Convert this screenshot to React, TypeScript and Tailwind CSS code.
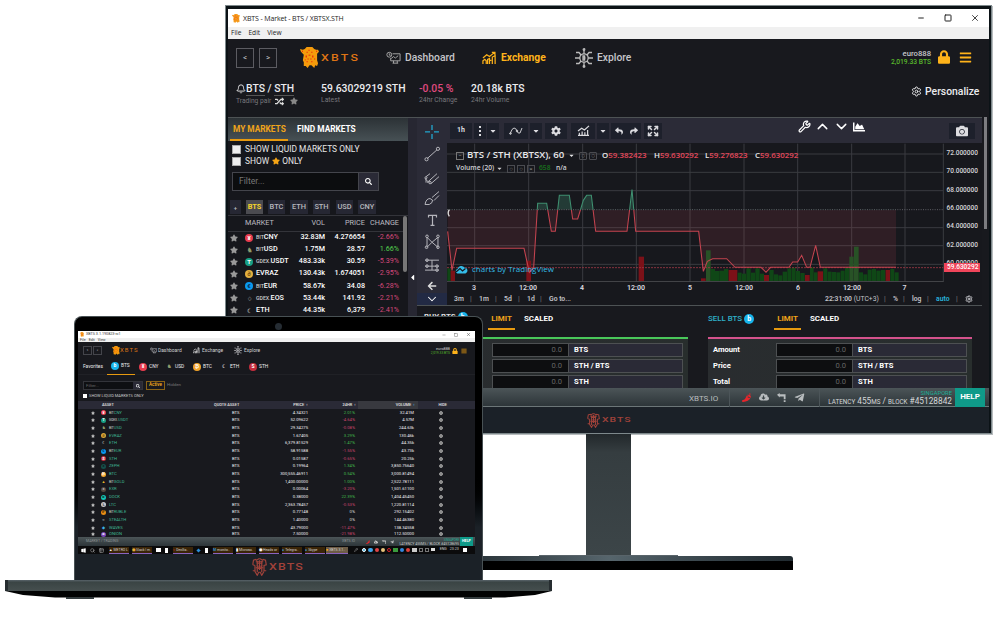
import React from "react";
import {
  FaBars, FaCamera, FaChartArea, FaCloudDownloadAlt, FaCog, FaLock, FaPepperHot,
  FaRandom, FaReply, FaSearch, FaShare, FaStar, FaTelegramPlane, FaWindows, FaArrowLeft, FaCaretDown, FaCaretLeft,
} from "react-icons/fa";
import { Bell, ChevronDown, ChevronUp, Expand, Settings, Wrench, Minus, Square, X, Pencil, Search, PanelsTopLeft } from "lucide-react";

function Beast({ className }: { className: string }) {
  return (
    <svg viewBox="0 0 20 22" className={className} preserveAspectRatio="none">
      <path
        fill="currentColor"
        d="M0 2 L3 3 L5 2 L7 0 L13 0 L15 2 L17 3 L19 3 L20 5 L18 7 L18 14 L19 17 L18 20 L16 19 L15 22 L12 19 L10 19 L8 22 L6 20 L4 20 L4 16 L3 14 L4 8 L1 5 Z"
      />
      <path
        className="fill-red-600"
        d="M7 5h1v1h-1z M12 5h1v1h-1z M9 8h2v1h-2z M6 9h1v2h-1z M13 9h1v2h-1z M8 12h1v1h-1z M11 12h1v1h-1z M7 15h1v1h-1z M12 15h1v1h-1z M2 4h1v1h-1z M17 4h1v1h-1z M9 3h1v1h-1z M15 12h1v1h-1z M5 13h1v1h-1z"
      />
    </svg>
  );
}

function BeastOutline({ className }: { className: string }) {
  return (
    <svg viewBox="0 0 20 24" className={className} preserveAspectRatio="none" fill="none" stroke="currentColor" strokeWidth="1.6">
      <path d="M1 9 L2 3 L5 2 L6 3 L9 1 L11 1 L14 3 L15 2 L18 3 L19 9 L16 10 L16 17 L19 17 M4 17 L1 17 M4 10 L4 18 L7 23 L9 19 L11 19 L13 23 L16 18 M1 9 L4 10" />
      <path d="M5 5h10 M6 7h8 M6 10l3 1 M14 10l-3 1 M8 14h4 M7 4v15 M13 4v15 M10 3v13 M5 13h10" />
    </svg>
  );
}

function DashIcon({ className }: { className: string }) {
  return (
    <svg viewBox="0 0 16 14" className={className} fill="none" stroke="currentColor" strokeWidth="1">
      <circle cx="3.5" cy="3.5" r="2.6" />
      <path d="M3.5 2v2h1.5 M7 2.5h8v7.5h-10v-3 M7 12.5h6 M8 10v2.5 M12 10v2.5 M5.5 7.5l2.5-2 2 1.5 3-2.5" />
    </svg>
  );
}

function GrowthIcon({ className }: { className: string }) {
  return (
    <svg viewBox="0 0 16 14" className={className} fill="none" stroke="currentColor" strokeWidth="1.3">
      <path d="M1 13.300V10l2-1.500l1.500 1.500v3.300 M6 13.300V8.500l2-1v5.800 M8 9.500l2 0 M11 13.300V6l3-1.500v8.800 M1 7l4-3.500 3 2L13.500 1 M10.500 1H13.800V4" />
    </svg>
  );
}

function ExploreIcon({ className }: { className: string }) {
  return (
    <svg viewBox="0 0 20 20" className={className} fill="none" stroke="currentColor" strokeWidth="1.3">
      <circle cx="10" cy="10" r="4.2" />
      <path d="M10 1v5 M10 14v5 M1 10h5 M14 10h5 M2 4.5h3l2 2.5 M18 4.5h-3l-2 2.5 M2 15.5h3l2-2.5 M18 15.5h-3l-2-2.5 M9 8h1.6v4H9z M9 10h2.5" />
      <circle cx="10" cy="1.5" r=".8" /><circle cx="10" cy="18.5" r=".8" />
    </svg>
  );
}

function TapIcon({ className }: { className: string }) {
  return (
    <svg viewBox="0 0 10 10" className={className} fill="currentColor">
      <path d="M0 2L3 0V1.500H9.500V7H7.500V4H3V5Z M7.500 8h2v2h-2z" />
    </svg>
  );
}

function Coin({ className, glyph }: { className: string; glyph: string }) {
  return <span className={`flex shrink-0 items-center justify-center rounded-full font-bold ${className}`}>{glyph}</span>;
}

const markets = [
  ["¥", "text-white bg-[#e83c4e]", "BIT", "CNY", "32.83M", "4.276654", "-2.66%"],
  ["♞", "text-[#8d9a6a]", "BIT", "USD", "1.75M", "28.57", "1.66%"],
  ["T", "text-white bg-[#17a085]", "GDEX.", "USDT", "483.33k", "30.59", "-5.39%"],
  ["∂", "text-[#7a5510] bg-[#e3b040]", "", "EVRAZ", "130.43k", "1.674051", "-2.95%"],
  ["€", "text-[#06305a] bg-[#0a98ee]", "BIT", "EUR", "58.67k", "34.08", "-6.28%"],
  ["♢", "text-[#777]", "GDEX.", "EOS", "53.44k", "141.92", "-2.21%"],
  ["☾", "text-[#999]", "", "ETH", "44.35k", "6,379", "-2.41%"],
];

function MarketPanel() {
  return (
    <div className="flex h-[200px] w-[180px] shrink-0 flex-col border-y border-[#4d5254] bg-[#16171c]">
      <div className="flex h-[23px] shrink-0 items-center bg-gradient-to-b from-[#2c3236] to-[#475155] text-[8.3px] font-bold">
        <div className="ml-[2px] flex h-[23px] w-[58px] items-center border-b-2 border-[#e79a10] pt-[2px] pl-[3px] whitespace-nowrap text-[#f0a41a]">MY MARKETS</div>
        <div className="ml-[9px] whitespace-nowrap text-white">FIND MARKETS</div>
      </div>
      <div className="mt-[2px] flex h-3 shrink-0 items-center pl-1 text-[8.4px] text-[#e6e6e6]">
        <span className="mr-1 size-[9px] border border-[#aaa] bg-[#eee]" />SHOW LIQUID MARKETS ONLY
      </div>
      <div className="flex h-3 shrink-0 items-center pl-1 text-[8.4px] text-[#e6e6e6]">
        <span className="mr-1 size-[9px] border border-[#aaa] bg-[#eee]" />SHOW<FaStar className="mx-[2.5px] size-[8px] text-[#f5a415]" />ONLY
      </div>
      <div className="mt-[5px] ml-1 flex h-[19px] w-[147px] shrink-0 border border-[#44454c]">
        <div className="flex flex-1 items-center bg-[#0c0d0f] pl-1.5 text-[8.6px] text-[#777]">Filter...</div>
        <div className="flex w-[20px] items-center justify-center border-l border-[#44454c] bg-[#2a2a36]"><FaSearch className="size-[7px] text-white" /></div>
      </div>
      <div className="mt-[9px] flex h-[14px] shrink-0 pl-[2px] text-[7.4px] font-medium text-[#b7b7bd]">
        <span className="mr-[5px] flex w-[11px] items-center justify-center bg-[#262733] text-[6px]">+</span>
        <span className="mr-[5px] flex w-[17px] items-center justify-center bg-[#4b4b50] font-bold text-[#f3d32b]">BTS</span>
        <span className="mr-[5px] flex w-[17px] items-center justify-center bg-[#262733]">BTC</span>
        <span className="mr-[5px] flex w-[18px] items-center justify-center bg-[#262733]">ETH</span>
        <span className="mr-[6px] flex w-[17px] items-center justify-center bg-[#262733]">STH</span>
        <span className="mr-[5px] flex w-[17px] items-center justify-center bg-[#262733]">USD</span>
        <span className="flex w-[18px] items-center justify-center bg-[#262733]">CNY</span>
      </div>
      <div className="mt-px flex min-h-0 flex-1 border-t border-[#33343a]">
        <div className="w-[175px] shrink-0">
          <div className="flex h-[15.5px] items-center border-b border-[#33343a] text-[7.3px] text-[#bdbdc1]">
            <span className="w-[66px] pl-[17px]">MARKET</span><span className="w-[31px] text-right">VOL</span>
            <span className="w-[40px] text-right">PRICE</span><span className="w-[34px] text-right whitespace-nowrap">CHANGE</span>
          </div>
          {markets.map((m) => (
            <div key={m[3]} className="flex h-[12.1px] items-center text-[7.2px] font-medium text-white">
              <FaStar className="ml-[2px] size-[8px] shrink-0 text-[#999]" />
              <Coin className={`ml-[7px] size-[8px] text-[6px] ${m[1]}`} glyph={m[0]} />
              <span className="ml-[3px] w-[38px] whitespace-nowrap"><span className="text-[5.2px] text-[#ccc]">{m[2]}</span>{m[3]}</span>
              <span className="w-[31px] text-right">{m[4]}</span>
              <span className="w-[40px] text-right">{m[5]}</span>
              <span className={m[6][0] === "-" ? "w-[34px] text-right font-normal text-[#d3487a]" : "w-[34px] text-right font-normal text-[#54d34e]"}>{m[6]}</span>
            </div>
          ))}
        </div>
        <div className="h-[56px] w-[4px] rounded-sm bg-[#777]" />
      </div>
    </div>
  );
}

const linePath =
  "M113 355 L126 472 L140 406 L342 406 L358 478 L371 464 L383 271 L410 271 L424 355 L436 355 L448 247 L478 247 L488 318 L503 318 L520 262 L530 247 L544 247 L557 355 L651 355 L666 230 L677 355 L866 355 L880 475 L892 445 L908 437 L950 437 L975 463 L1053 463 L1068 478 L1082 463 L1137 463 L1148 447 L1163 447 L1175 427 L1190 463 L1200 463 L1217 397 L1231 463 L1458 463";

const bars: [number, number, number, boolean][] = [
  [112, 10, 38, true], [122, 13, 31, false], [349, 14, 61, false], [686, 16, 73, false], [873, 14, 8, false],
  [888, 14, 92, true], [902, 13, 36, true], [915, 13, 30, true], [928, 14, 31, true], [942, 13, 36, true], [956, 26, 33, false],
  [983, 12, 25, true], [996, 12, 22, true], [1009, 13, 38, true], [1023, 12, 25, true], [1036, 13, 38, true], [1050, 12, 22, true], [1062, 15, 18, false],
  [1078, 13, 33, true], [1092, 12, 20, true], [1105, 12, 17, true], [1118, 13, 28, true], [1132, 12, 38, true], [1145, 12, 40, true], [1158, 12, 30, true], [1171, 13, 24, true],
  [1185, 14, 18, false], [1200, 11, 41, true], [1212, 11, 26, true], [1223, 16, 29, false], [1240, 12, 38, true], [1253, 12, 28, true], [1266, 12, 27, true], [1279, 12, 26, true], [1292, 12, 31, true], [1305, 12, 39, true],
  [1318, 13, 73, true], [1332, 14, 103, true], [1347, 12, 26, true], [1360, 12, 20, true], [1373, 12, 34, true], [1386, 12, 36, true], [1399, 13, 31, true], [1413, 13, 33, true], [1427, 13, 33, false], [1441, 12, 36, true], [1454, 12, 26, true],
];

function PricePlot() {
  return (
    <svg viewBox="111 90 1491 417" className="h-[139px] w-[497px] shrink-0" preserveAspectRatio="none">
      <rect x="111" y="90" width="1491" height="417" fill="#17181d" />
      <g stroke="#3a3b40" strokeWidth="3">
        {[194, 356, 518, 679, 840, 1002, 1163, 1325, 1485, 1600].map((x) => <path key={x} d={`M${x} 92V507`} />)}
        {[123, 178, 233, 344, 398, 454].map((y) => <path key={y} d={`M111 ${y}H1600`} />)}
        <path d="M111 506H1600" stroke="#4b4c50" />
      </g>
      <clipPath id="above"><rect x="111" y="90" width="1347" height="200" /></clipPath>
      <clipPath id="below"><rect x="111" y="290" width="1347" height="217" /></clipPath>
      <path d={`${linePath} L1458 290 L113 290 Z`} fill="#a8404c" fillOpacity=".17" clipPath="url(#below)" />
      <path d={`${linePath} L1458 290 L113 290 Z`} fill="#3f8f70" fillOpacity=".3" clipPath="url(#above)" />
      {bars.map(([x, w, h, up]) => <rect key={x} x={x} y={504 - h} width={w} height={h} fill={up ? (h > 70 ? "#285226" : "#0f4716") : "#7c1118"} />)}
      <path d="M111 290H1600" stroke="#6b6c72" strokeWidth="2.5" strokeDasharray="3 4" />
      <path d="M111 464H1600" stroke="#9c3845" strokeWidth="2.5" strokeDasharray="6 3" />
      <path d={linePath} fill="none" stroke="#c3434f" strokeWidth="3.2" clipPath="url(#below)" />
      <path d={linePath} fill="none" stroke="#3f8f70" strokeWidth="3.2" clipPath="url(#above)" />
      <path d="M118 290q-7 10 0 20" fill="none" stroke="#ddd" strokeWidth="4" />
    </svg>
  );
}

function DrawTools() {
  return (
    <div className="flex w-[30px] shrink-0 flex-col items-center bg-[#2b2b37] text-[#b5b5bb]">
      <svg viewBox="0 0 30 163" className="h-[163px] w-[30px]" fill="none" stroke="currentColor" strokeWidth="1">
        <path stroke="#22a7d0" strokeWidth="1.3" d="M15 7v5 M15 16v5 M8 14h5 M17 14h5" />
        <path d="M10 41l10-9" /><circle cx="9.5" cy="41.5" r="1.6" /><circle cx="21" cy="31" r="1.6" />
        <path d="M9 59l4-3 M10 65l10-9 M14 66l8-7 M8 61l4 4 M9 65v-4" /><circle cx="9" cy="60" r="1" /><circle cx="13" cy="65" r="1.2" />
        <path d="M8 87q1-6 5-6q4 1 2 4q-2 3-7 2z M15 80l7-6 M17 83l5-5" />
        <path d="M11.5 100v-2h8v2 M15.5 98v10 M13.5 108h4" strokeWidth="1.2" />
        <path d="M10 120v10 M10 120l5 5l6-5 M10 130l5-5l6 5v-10" /><circle cx="10" cy="119" r="1.3" /><circle cx="21" cy="119" r="1.3" /><circle cx="9.5" cy="130" r="1.3" /><circle cx="21" cy="130" r="1.3" />
        <path d="M8 143h14 M8 149h14 M8 153h14 M15 143v10" /><circle cx="10" cy="143" r="1.3" /><circle cx="20" cy="149" r="1.3" /><circle cx="10" cy="149" r="1.3" /><circle cx="20" cy="153" r="1.3" />
      </svg>
      <FaArrowLeft className="mt-[1px] size-[10px] text-[#ddd]" />
      <div className="mt-[2px] flex h-[12px] w-full items-center justify-center bg-[#222a44]"><ChevronDown className="size-[14px] text-white" strokeWidth={1.8} /></div>
    </div>
  );
}

function ChartToolbar() {
  return (
    <div className="flex h-[25px] shrink-0 items-center bg-[#2b2b37] text-[#dcdce0]">
      <span className="ml-[3px] flex h-[16px] w-[22px] items-center justify-center bg-[#1d202b] text-[7px] font-bold">1h</span>
      <span className="ml-[2px] flex h-[16px] w-[12px] items-center justify-center bg-[#1d202b]">
        <svg viewBox="0 0 2 10" className="h-[10px] w-[2px]" fill="currentColor"><path d="M0 0h2v2H0z M0 4h2v2H0z M0 8h2v2H0z" /></svg>
      </span>
      <span className="ml-px flex h-[16px] w-[12px] items-center justify-center bg-[#1d202b]"><FaCaretDown className="size-[8px]" /></span>
      <span className="ml-[5px] flex h-[16px] w-[24px] items-center justify-center bg-[#1d202b]">
        <svg viewBox="0 0 14 10" className="h-[10px] w-[14px]" fill="none" stroke="currentColor" strokeWidth=".9"><path d="M1 8Q3 2 5 2T8 5T11 7L13 2" /><circle cx="1.5" cy="7.5" r=".8" /><circle cx="8" cy="5" r=".8" /></svg>
      </span>
      <span className="ml-[2px] flex h-[16px] w-[12px] items-center justify-center bg-[#1d202b]"><FaCaretDown className="size-[8px]" /></span>
      <span className="ml-[3px] flex h-[16px] w-[22px] items-center justify-center bg-[#1d202b]"><FaCog className="size-[10px]" /></span>
      <span className="ml-[4px] flex h-[16px] w-[24px] items-center justify-center bg-[#1d202b]">
        <svg viewBox="0 0 14 12" className="h-[11px] w-[13px]" fill="none" stroke="currentColor" strokeWidth="1.3"><path d="M2.5 11V8.5 M5.5 11V7 M8.5 11V8 M11.5 11V5.5 M1 11.3h12 M1 6.5l4-3 3 2 5-4.5" /></svg>
      </span>
      <span className="ml-[2px] flex h-[16px] w-[12px] items-center justify-center bg-[#1d202b]"><FaCaretDown className="size-[8px]" /></span>
      <span className="ml-[2px] flex h-[16px] w-[30px] items-center justify-around bg-[#1d202b]"><FaReply className="size-[8px]" /><FaShare className="size-[8px]" /></span>
      <span className="ml-[3px] flex h-[16px] w-[18px] items-center justify-center bg-[#1d202b]"><Expand className="size-[12px]" strokeWidth={3} /></span>
      <Wrench className="mb-[9px] ml-[136px] size-[13px] text-white" strokeWidth={2.2} />
      <ChevronUp className="mb-[8px] ml-[3px] size-[17px] text-white" strokeWidth={2} />
      <ChevronDown className="mb-[8px] ml-[2px] size-[17px] text-white" strokeWidth={2} />
      <FaChartArea className="mb-[8px] ml-[3px] size-[12px] text-white" />
      <span className="ml-[84px] flex h-[16px] w-[26px] items-center justify-center bg-[#1d202b]"><FaCamera className="size-[12px]" /></span>
    </div>
  );
}

const prices = ["72.000000", "70.000000", "68.000000", "66.000000", "64.000000", "62.000000", "60.000000"];

function Bar() {
  return <span className="w-[9px] shrink-0 text-[#777]">|</span>;
}

function ChartPanel() {
  return (
    <div className="flex h-[189px] w-[565px] shrink-0 border-t border-b border-[#4d5254] bg-[#17181d]">
      <DrawTools />
      <div className="flex w-[535px] flex-col">
        <ChartToolbar />
        <div className="relative flex h-[139px]">
          <PricePlot />
          <div className="relative w-[38px] pt-[3px] pl-[2.5px] text-[6.5px] font-medium text-[#d6d6da]">
            {prices.map((p) => <div key={p} className="h-[18.35px] leading-[14px]">{p}</div>)}
            <div className="absolute top-[120px] left-0 flex h-[9px] w-[36px] items-center bg-[#f0455a] pl-[3px] text-[6.5px] text-white">59.630292</div>
          </div>
          <div className="absolute top-[6px] left-[9px] font-['Open_Sans',sans-serif]">
            <div className="flex h-[13px] items-center text-[9.6px] font-semibold whitespace-nowrap text-[#e8e8ea]">
              <span className="mr-[3px] size-[8px] border border-[#777] text-center text-[6px] leading-[5px] text-[#888]">–</span>
              <span className="w-[99px]">BTS / STH (XBTSX), 60</span>
              <FaCaretDown className="ml-[2px] size-[7px]" />
              <span className="ml-[4px] flex w-[20px] gap-[2px] text-[#777]"><span className="size-[8px] rounded-[1px] border border-[#4a4b50] text-center text-[7px] leading-[6px]">○</span><span className="size-[8px] rounded-[1px] border border-[#4a4b50] text-center text-[7px] leading-[6px]">○</span></span>
              <span className="w-[52px] pl-[3px] text-[7.9px]">O<span className="text-[#e2475a]">59.382423</span></span>
              <span className="w-[51px] pl-[3px] text-[7.9px]">H<span className="text-[#e2475a]">59.630292</span></span>
              <span className="w-[49px] pl-[3px] text-[7.9px]">L<span className="text-[#e2475a]">59.276823</span></span>
              <span className="pl-[4px] text-[7.9px]">C<span className="text-[#e2475a]">59.630292</span></span>
            </div>
            <div className="flex h-[13px] items-center text-[6.7px] font-semibold text-[#d0d0d4]">
              <span className="w-[38px] whitespace-nowrap">Volume (20)</span>
              <FaCaretDown className="ml-[2px] size-[7px]" />
              <span className="ml-[4px] flex w-[32px] gap-[2px] text-[#888]">
                <span className="size-[8px] border border-[#4a4b50] text-center text-[6px] leading-[6px]">○</span>
                <span className="size-[8px] border border-[#4a4b50] text-center text-[6px] leading-[6px]">○</span>
                <span className="size-[8px] border border-[#4a4b50] text-center text-[6px] leading-[6px]">×</span>
              </span>
              <span className="w-[17px] text-[#17701c]">658</span><span>n/a</span>
            </div>
          </div>
          <div className="absolute top-[119px] left-[8px] flex h-[14px] items-center font-['Open_Sans',sans-serif] text-[8px] font-medium whitespace-nowrap text-[#34bce8]">
            <svg viewBox="0 0 13 9" className="mr-[4px] h-[9px] w-[13px]"><path fill="currentColor" d="M2.5 8.5A2.3 2.3 0 0 1 2.5 4A4 4 0 0 1 9.5 2.5A3.1 3.1 0 0 1 10.5 8.5Z" /><path d="M1 7L5 3.5L7.5 6L10.5 3.5" stroke="#17181d" fill="none" strokeWidth="1.2" /></svg>
            charts by TradingView
          </div>
        </div>
        <div className="flex h-[12px] items-center text-center text-[7px] font-semibold text-[#dcdce0]">
          <span className="w-[54px]">3</span><span className="w-[54px]">12:00</span><span className="w-[54px]">4</span><span className="w-[54px]">12:00</span><span className="w-[54px]">5</span>
          <span className="w-[54px]">12:00</span><span className="w-[54px]">6</span><span className="w-[54px]">12:00</span><span className="w-[51px]">7</span>
        </div>
        <div className="flex h-[11px] items-center pb-px text-[6.8px] font-semibold whitespace-nowrap text-[#c4c4c9]">
          <span className="ml-[7px] w-[16px] shrink-0">3m</span><Bar /><span className="w-[16px] shrink-0">1m</span><Bar />
          <span className="w-[14px] shrink-0">5d</span><Bar /><span className="w-[13px] shrink-0">1d</span><Bar /><span className="w-[50px] shrink-0">Go to...</span>
          <span className="ml-[226px] w-[59px] shrink-0">22:31:00 <span className="font-normal">(UTC+3)</span></span>
          <Bar /><span className="w-[10px] shrink-0">%</span><Bar /><span className="w-[15px] shrink-0">log</span><Bar />
          <span className="w-[20px] shrink-0 text-[#27b4dc]">auto</span><Bar /><Settings className="size-[8px] shrink-0" strokeWidth={3} />
        </div>
      </div>
    </div>
  );
}

function OrderForm({ labels, accent }: { labels: boolean; accent: string }) {
  return (
    <div className={`flex h-[51px] w-[264px] flex-col gap-[2px] overflow-hidden border-t-2 bg-gradient-to-r from-[#292c2f] to-[#282e2d] pt-[4px] text-[7.6px] font-bold text-white ${accent}`}>
      {["BTS", "STH / BTS", "STH"].map((unit, i) => (
        <div key={unit} className="flex h-[14px] shrink-0 items-center">
          <span className="w-[68px] pl-[5px]">{labels ? ["Amount", "Price", "Total"][i] : ""}</span>
          <div className="flex h-[14px] w-[191px] border border-[#4d5052]">
            <span className="flex w-[76px] items-center justify-end border-r border-[#4d5052] bg-[#0d0e10] pr-[6px] font-normal text-[#666]">0.0</span>
            <span className="flex flex-1 items-center bg-[#2a2a36] pl-[5px]">{unit}</span>
          </div>
        </div>
      ))}
    </div>
  );
}

function OrderTabs({ title, tint }: { title: string; tint: string }) {
  return (
    <div className="flex h-[31px] w-[264px] items-start pt-[7px] text-[7.9px] font-bold">
      <span className={`flex h-[12px] items-center whitespace-nowrap ${tint}`}>{title}<Coin className="ml-[2px] size-[10px] bg-[#17b4ec] text-[7px] text-white" glyph="b" /></span>
      <span className="flex h-[17px] w-[27px] justify-center border-b-2 border-[#e79a10] text-[#f0a41a]">LIMIT</span>
      <span className="ml-[9px] text-white">SCALED</span>
    </div>
  );
}

function Stat({ value, note, className }: { value: string; note: string; className: string }) {
  return (
    <div className={className}>
      <div className="h-[13px] leading-[13px]">{value}</div>
      <div className="h-[10px] text-[6.8px] leading-[10px] font-normal text-[#77777c]">{note}</div>
    </div>
  );
}

function Monitor() {
  return (
    <div className="absolute top-[5px] left-[225px] h-[566px] w-[768px]">
      <div className="flex h-[429px] w-[767px] flex-col border border-[#7d888b] bg-[#0b1216] px-[2px] pt-[3px] shadow-[1px_1px_0_#b7bcbe]">
        <div className="flex h-[18px] shrink-0 items-center bg-white text-[#222]">
          <Beast className="ml-[4px] h-[9px] w-[8px] text-[#f59b1b]" />
          <span className="ml-[3px] pt-[2px] font-['Open_Sans',sans-serif] text-[7px] tracking-[-0.13px]">XBTS - Market - BTS / XBTSX.STH</span>
          <Minus className="ml-auto size-[8px]" strokeWidth={3} /><Square className="ml-[19px] size-[8px]" strokeWidth={3} /><X className="mr-[9px] ml-[18px] size-[10px]" />
        </div>
        <div className="flex h-[12px] shrink-0 items-center gap-[7px] bg-[#f0f0f0] pl-[3px] font-['Open_Sans',sans-serif] text-[6.6px] text-[#222]"><span>File</span><span>Edit</span><span>View</span></div>
        <div className="flex h-[37px] shrink-0 items-center bg-[#18191e] text-[10.3px] font-medium text-[#c6c6ca]">
          <span className="ml-[8px] flex h-[20px] w-[18px] items-center justify-center border border-[#5c5c62] text-[8px] font-normal">&lt;</span>
          <span className="ml-[5px] flex h-[20px] w-[18px] items-center justify-center border border-[#5c5c62] text-[8px] font-normal">&gt;</span>
          <Beast className="ml-[23px] h-[21px] w-[19px] text-[#f59b0b]" />
          <span className="ml-[2px] w-[65px]"><span className="inline-block origin-left scale-x-[1.3] text-[9.5px] tracking-[1.7px] text-[#dd7315]">XBTS</span></span>
          <DashIcon className="h-[14px] w-[15px] text-[#aaa]" />
          <span className="ml-[4px] w-[77px]">Dashboard</span>
          <GrowthIcon className="h-[14px] w-[15px] text-[#ffb31a]" />
          <span className="ml-[4px] w-[73px] font-bold text-[#ffb31a]">Exchange</span>
          <ExploreIcon className="h-[20px] w-[20px] text-[#bbb]" />
          <span className="ml-[3px] w-[290px]">Explore</span>
          <span className="w-[44px] text-right text-[7.7px] leading-[9px] whitespace-nowrap"><span className="block">euro888</span><span className="block text-[6.7px] leading-[8px] text-[#58b92c]">2,019.33 BTS</span></span>
          <FaLock className="mb-px ml-[7px] h-[14px] w-[12px] text-[#ffb31a]" />
          <FaBars className="ml-[9px] size-[13px] text-[#ffb31a]" />
        </div>
        <div className="flex h-[41px] shrink-0 bg-[#18191e] pt-[6px] text-[10.4px] font-medium whitespace-nowrap text-[#ececef]">
          <div className="ml-[8px] w-[85px]">
            <div className="flex h-[14px] items-center"><Bell className="size-[10px]" strokeWidth={2.2} /><span className="border-b border-[#555] leading-[12px]">BTS</span>&nbsp;/&nbsp;<span className="border-b border-[#555] leading-[12px]">STH</span></div>
            <div className="flex h-[10px] items-center text-[6.7px] font-normal text-[#77777c]">Trading pair<FaRandom className="ml-[4px] size-[9px] text-[#ddd]" /><FaStar className="ml-[6px] size-[8px] text-[#888]" /></div>
          </div>
          <Stat className="w-[98px]" value="59.63029219 STH" note="Latest" />
          <Stat className="w-[52px] [&>div:first-child]:text-[#e04a80]" value="-0.05 %" note="24hr Change" />
          <Stat className="w-[440px]" value="20.18k BTS" note="24hr Volume" />
          <div className="mt-[3px] flex h-[13px] items-center gap-[3px]"><Settings className="size-[11px]" />Personalize</div>
        </div>
        <div className="flex h-[271px] shrink-0 bg-[#18191e]">
          <MarketPanel />
          <div className="flex h-[271px] w-[9px] flex-col border-t border-[#4d5254] bg-[#272732] pt-[155px]"><FaCaretLeft className="size-[9px] shrink-0 text-white" /></div>
          <div className="flex w-[565px] shrink-0 flex-col">
            <ChartPanel />
            <div className="flex h-[82px]">
              <div className="ml-[7px] w-[264px] shrink-0"><OrderTabs title="BUY BTS" tint="w-[64px] -mt-[2px] text-[#ddd]" /><OrderForm labels={false} accent="border-[#49c75a]" /></div>
              <div className="ml-[20px] w-[264px] shrink-0"><OrderTabs title="SELL BTS" tint="w-[66px] text-[#2fb1c9] font-medium" /><OrderForm labels accent="border-[#d4528c]" /></div>
            </div>
          </div>
          <div className="ml-[2px] h-[112px] w-[3px] bg-[#7c7c80]" />
        </div>
        <div className="flex h-[19px] shrink-0 items-center border-b border-[#6c7678] bg-gradient-to-b from-[#4c5558] to-[#2d3539] text-[8px] text-[#b9bdbf]">
          <span className="ml-[461px] w-[40px] pt-[3px] text-[8px]">XBTS.IO</span>
          <div className="flex h-[19px] w-[91px] items-center gap-[8px] border-x border-[#4c5559] pl-[12px]"><FaPepperHot className="size-[9px] text-[#e5262c]" /><FaCloudDownloadAlt className="size-[10px]" /><TapIcon className="size-[9px]" /><FaTelegramPlane className="size-[11px]" /></div>
          <div className="flex w-[132px] flex-col items-end pt-[2px] whitespace-nowrap"><span className="text-[5.8px] leading-[7px] text-[#1cae96]">SINGAPORE</span><span className="text-[8.3px] leading-[9px] text-[#d4d7d8]"><span className="text-[6.3px]">LATENCY</span> 455<span className="text-[6.3px]">MS</span> / <span className="text-[6.3px]">BLOCK</span> #45128842</span></div>
          <span className="ml-[3px] flex h-[19px] w-[30px] items-center justify-center bg-[#0f9a89] text-[8px] font-bold text-white">HELP</span>
        </div>
        <div className="flex flex-1 items-center bg-[#1b2128] pl-[359px] text-[#a0423a]">
          <BeastOutline className="h-[15px] w-[13px]" /><span className="ml-[2px] inline-block origin-left scale-x-[1.3] text-[8px] font-medium tracking-[0.8px]">XBTS</span>
        </div>
      </div>
      <div className="flex flex-col">
        <div className="ml-[361px] h-[121px] w-[45px] bg-gradient-to-b from-[#22282b] via-[#353d40] via-15% to-[#3c4548]" />
        <div className="ml-[314px] h-px w-[139px] bg-[#59646a]" />
        <div className="ml-[200px] h-[5px] w-[368px] rounded-tr-[3px] bg-gradient-to-r from-[#1c2429] via-[#56656c] to-[#202a30]" />
        <div className="ml-[200px] h-[9px] w-[368px] bg-black" />
      </div>
    </div>
  );
}

const assets = [
  ["¥", "text-white bg-[#e83c4e]", "BIT", "CNY", "4.34321", "2.01%", "32.41M"],
  ["T", "text-white bg-[#17a085]", "GDEX.", "USDT", "52.09622", "-4.64%", "4.57M"],
  ["♞", "text-[#8d9a6a]", "BIT", "USD", "29.34275", "-0.08%", "244.63k"],
  ["∂", "text-[#7a5510] bg-[#dca83a]", "", "EVRAZ", "1.67405", "3.29%", "130.46k"],
  ["☾", "text-[#999]", "", "ETH", "6,379.81529", "1.47%", "44.35k"],
  ["€", "text-[#06305a] bg-[#0a98ee]", "BIT", "EUR", "58.91588", "-1.55%", "43.73k"],
  ["S", "text-white bg-[#c42d3d]", "", "STH", "0.01587", "-0.65%", "20.25k"],
  ["z", "text-[#18181d] bg-[#15504b]", "", "ZEPH", "0.19964", "1.34%", "3,850.75640"],
  ["₿", "text-white bg-[#f1a32a]", "", "BTC", "300,555.46911", "0.54%", "3,000.81494"],
  ["▲", "text-[#e8b92a]", "BIT", "GOLD", "1,400.00000", "1.00%", "2,522.78111"],
  ["x", "text-[#bbb] bg-[#554840]", "", "EXR", "0.00064", "-3.20%", "1,501.61100"],
  ["o", "text-[#18181d] bg-[#12c5b5]", "", "DOCK", "0.38000", "22.39%", "1,404.45450"],
  ["Ł", "text-[#555] bg-[#c9c9cd]", "", "LTC", "2,363.78457", "-0.53%", "1,220.81114"],
  ["₽", "text-[#5a3200] bg-[#e88d16]", "BIT", "RUBLE", "0.77148", "0%", "292.15402"],
  ["≈", "text-[#aaa]", "", "STEALTH", "1.40000", "0%", "144.46380"],
  ["◆", "text-[#3db1e5]", "", "WAVES", "43.79000", "-11.47%", "138.34558"],
  ["o", "text-white bg-[#7a47b8]", "", "ONION", "7.50000", "-21.98%", "112.50000"],
];

const changeTint = (v: string) => (v[0] === "-" ? "text-[#c9456f]" : v === "0%" ? "text-[#ddd]" : "text-[#42bb4c]");

function Task({ icon, tint, label, className }: { icon: string; tint: string; label: string; className: string }) {
  return (
    <span className={`flex h-[7px] shrink-0 items-center gap-[1px] border-b border-[#8a63c0] text-[3.5px] leading-[6px] ${className}`}>
      <b className={tint}>{icon}</b>{label}
    </span>
  );
}

function Taskbar() {
  return (
    <div className="flex h-[8px] shrink-0 items-center bg-[#0b0b0c] pl-[3px] text-[3.6px] whitespace-nowrap text-[#d4d4d4]">
      <FaWindows className="mr-[4px] size-[5px] shrink-0 text-white" /><Search className="mr-[4px] size-[5px] shrink-0" /><PanelsTopLeft className="size-[5px] shrink-0" />
      <Task icon="▲" tint="text-white" label="METRO L" className="ml-[5px] w-[20px] bg-[#3a2508]" />
      <Task icon="◉" tint="text-[#e8b23a]" label="Slack | m" className="ml-[3px] w-[20px] bg-[#3a2508]" />
      <span className="ml-[4px] h-[4px] w-[5px] shrink-0 bg-white" /><span className="ml-[4px] h-[5px] w-[3px] shrink-0 bg-white" />
      <Task icon="○" tint="text-[#e33]" label="DexGa.." className="ml-[5px] w-[20px] bg-[#3a2508]" />
      <span className="ml-[4px] size-[3px] shrink-0 rotate-45 bg-[#2b8fd8]" /><span className="ml-[5px] h-[5px] w-[3px] shrink-0 bg-white" />
      <Task icon="M" tint="text-[#2b8fd8]" label="monito.." className="ml-[5px] w-[20px] bg-[#3a2508]" />
      <Task icon="▮" tint="text-white" label="Microso." className="ml-[3px] w-[20px] bg-[#3a2508]" />
      <Task icon="◉" tint="text-white" label="Heads or" className="ml-[3px] w-[20px] bg-[#3a2508]" />
      <Task icon="●" tint="text-[#38a7e8]" label="Telegra.." className="ml-[3px] w-[20px] bg-[#3a2508]" />
      <Task icon="●" tint="text-[#38a7e8]" label="Skype" className="ml-[3px] w-[20px] bg-[#3a2508]" />
      <Task icon="■" tint="text-[#f5a415]" label="XBTS 3.1.." className="ml-[1px] w-[22px] bg-[#6d5c46]" />
      <Pencil className="ml-[6px] size-[4px] shrink-0" />
      <div className="ml-[4px] flex shrink-0 items-center gap-[2px]">
        <span className="size-[4.3px] rounded-full border border-white bg-[#31a9d8]" /><span className="size-[4.3px] rounded-full bg-[#3fa4e8]" /><span className="size-[4.3px] rounded-full bg-[#e04446]" />
        <span className="size-[4.3px] rounded-full bg-[#e8c27a]" /><span className="size-[4.3px] rounded-full border border-[#d8242c]" /><span className="size-[4.3px] bg-[#3a9a3d]" />
        <span className="size-[4.3px] rounded-full bg-[#3487dd]" /><span className="size-[4.3px] rounded-full bg-[#e0403a]" /><span className="h-[4px] w-[4.3px] bg-[#ccc]" />
        <span className="size-[4px] border border-[#777]" /><span className="size-[4px] border border-[#777]" /><span className="h-[3px] w-[4px] bg-[#ddd]" />
      </div>
      <span className="ml-[5px]">ENG</span><span className="ml-[3px]">23:23</span><span className="ml-[4px] size-[4px] shrink-0 bg-white" />
    </div>
  );
}

function LaptopScreen() {
  return (
    <div className="flex h-[223px] w-[397px] flex-col overflow-hidden bg-[#18191e]">
      <div className="flex h-[7px] shrink-0 items-center bg-white text-[3.7px] text-[#333]">
        <Beast className="mr-[2px] ml-[2px] h-[5px] w-[4px] text-[#f59b1b]" />XBTS 3.1.190823-rc1
        <Minus className="ml-auto size-[4px]" /><Square className="ml-[8px] size-[4px]" /><X className="mr-[4px] ml-[8px] size-[5px]" />
      </div>
      <div className="flex h-[4px] shrink-0 items-center gap-[3px] bg-[#f0f0f0] pl-[2px] text-[3.6px] leading-[4px] text-[#333]"><span>File</span><span>Edit</span><span>View</span></div>
      <div className="flex h-[17px] shrink-0 items-center text-[4.9px] text-[#d2d2d6]">
        <span className="ml-[5px] flex size-[9px] items-center justify-center border border-[#44454b] text-[3px]">&lt;</span>
        <span className="ml-[1px] flex size-[9px] items-center justify-center border border-[#44454b] text-[3px]">&gt;</span>
        <Beast className="ml-[10px] h-[9px] w-[8px] text-[#f59b0b]" />
        <span className="w-[30px]"><span className="inline-block origin-left scale-x-[1.25] text-[4.8px] tracking-[0.8px] text-[#dd7315]">XBTS</span></span>
        <DashIcon className="h-[7px] w-[7px]" /><span className="ml-[1px] w-[35px]">Dashboard</span>
        <GrowthIcon className="h-[7px] w-[7px] text-white" /><span className="ml-[2px] w-[31px]">Exchange</span>
        <ExploreIcon className="h-[9px] w-[10px]" /><span className="ml-[1px] w-[186px]">Explore</span>
        <span className="w-[20px] text-right text-[3.8px] leading-[4px] whitespace-nowrap"><span className="block">euro888</span><span className="block text-[3.3px] text-[#58b92c]">2,019.33 BTS</span></span>
        <FaLock className="ml-[2px] size-[6px] text-[#ffb31a]" /><FaBars className="ml-[3px] size-[6px] text-[#e0960f]" />
      </div>
      <div className="flex h-[16px] shrink-0 items-center border-b border-[#202126] text-[4.9px] text-[#ececef]">
        <span className="ml-[5px] w-[24px]">Favorites</span>
        <span className="flex h-[16px] w-[28px] items-center gap-[2px] border-b border-[#e79a10] pl-[4px]"><Coin className="size-[8px] bg-[#17b4ec] text-[5px] text-white" glyph="b" />BTS</span>
        <span className="flex w-[31px] items-center gap-[2px] pl-[4px]"><Coin className="size-[8px] bg-[#e83c4e] text-[5px] text-white" glyph="¥" />CNY</span>
        <span className="flex w-[26px] items-center gap-[3px]"><Coin className="size-[6px] text-[5px] text-[#8d9a6a]" glyph="♞" />USD</span>
        <span className="flex w-[29px] items-center gap-[2px] pl-px"><Coin className="size-[8px] bg-[#f1a32a] text-[5px] text-white" glyph="₿" />BTC</span>
        <span className="flex w-[28px] items-center gap-[3px]"><Coin className="size-[6px] text-[5px] text-[#bbb]" glyph="☾" />ETH</span>
        <span className="flex items-center gap-[2px]"><Coin className="size-[8px] bg-[#c42d3d] text-[5px] text-white" glyph="S" />STH</span>
      </div>
      <div className="mt-[6px] flex h-[9px] shrink-0 items-center text-[4.4px]">
        <span className="ml-[5px] flex h-[9px] w-[60px] border border-[#33343a] bg-[#0e0f12]"><span className="flex-1 pl-[2px] leading-[7px] text-[#666]">Filter...</span><span className="flex w-[9px] items-center justify-center bg-[#2a2a36]"><FaSearch className="size-[4px] text-white" /></span></span>
        <span className="ml-[3px] flex h-[9px] w-[19px] items-center justify-center border border-[#8a6316] text-[4.6px] font-medium text-[#ffb31a]">Active</span><span className="ml-[2px] text-[#777]">Hidden</span>
      </div>
      <div className="mt-[2px] flex h-[7px] shrink-0 items-center text-[4px] text-[#ccc]"><span className="mr-[2px] ml-[5px] size-[4px] bg-white" />SHOW LIQUID MARKETS ONLY</div>
      <div className="mt-[2px] flex h-[8px] shrink-0 items-center bg-[#2a2a36] text-[3.9px] font-medium whitespace-nowrap text-[#e6e6e6]">
        <span className="ml-[24px] w-[112px]">ASSET</span><span className="w-[56px]">QUOTE ASSET</span><span className="w-[38px] text-right">PRICE&nbsp; ↕</span><span className="w-[48px] text-right">24HR&nbsp; ↕</span>
        <span className="ml-[2px] h-[8px] w-[60px] bg-[#38393f] pr-[3px] text-right leading-[8px]">VOLUME&nbsp; <span className="text-[#5cc8f0]">↕</span></span><span className="w-[29px] text-right">HIDE</span>
      </div>
      <div className="h-[128px] shrink-0 overflow-hidden">
        {assets.map((a, i) => (
          <div key={a[3]} className={`flex items-center text-[4.2px] whitespace-nowrap text-[#f2f2f5] ${i === 16 ? "h-[5.3px]" : "h-[7.67px]"}`}>
            <FaStar className="ml-[13px] size-[4px] text-[#bbb]" />
            <Coin className={`ml-[6px] size-[5px] text-[4px] ${a[1]}`} glyph={a[0]} />
            <span className="ml-[3px] w-[123px] text-[#3fb894]"><span className="text-[3.2px] text-[#ddd]">{a[2]}</span>{a[3]}</span>
            <span className="w-[26px]">BTS</span><span className="w-[50px] text-right">{a[4]}</span><span className={`w-[47px] text-right ${changeTint(a[5])}`}>{a[5]}</span>
            <span className="w-[59px] text-right">{a[6]}</span><span className="ml-[25px] size-[4px] rounded-full border border-[#999] bg-[#888]" />
          </div>
        ))}
      </div>
      <div className="flex h-[9px] shrink-0 items-center bg-gradient-to-b from-[#4c5558] to-[#2d3539] text-[3.6px] text-[#8d9496]">
        <span className="ml-[8px] w-[256px]">MARKET / TRADING</span><span className="w-[24px]">XBTS.IO</span>
        <FaPepperHot className="mr-[4px] size-[4px] text-[#e5262c]" /><FaCloudDownloadAlt className="mr-[4px] size-[4px] text-[#ccc]" /><TapIcon className="mr-[4px] size-[4px] text-[#ccc]" /><FaTelegramPlane className="size-[4px] text-[#ccc]" />
        <span className="ml-auto flex flex-col items-end leading-[4px] whitespace-nowrap"><span className="text-[2.8px] text-[#1cae96]">SINGAPORE</span><span className="text-[3.5px] text-[#ccc]">LATENCY 455MS / BLOCK #45128695</span></span>
        <span className="mr-[2px] ml-[1px] flex h-[9px] w-[13px] items-center justify-center bg-[#0f9a89] font-bold text-white">HELP</span>
      </div>
      <Taskbar />
    </div>
  );
}

function Laptop() {
  return (
    <div className="absolute top-[316px] left-[5px] flex w-[548px] flex-col">
      <div className="ml-[69px] flex h-[264px] w-[409px] flex-col rounded-t-[8px] border border-b-0 border-[#485154] bg-gradient-to-b from-black from-60% to-[#1b2127] to-80%">
        <div className="flex h-[14px] shrink-0 items-center pl-[200px]"><span className="mt-[4px] size-[7px] rounded-full bg-[#252c33]" /></div>
        <div className="pl-[3px]"><LaptopScreen /></div>
        <div className="flex flex-1 items-center bg-[#1b2127] pl-[177px] text-[#a0423a]"><BeastOutline className="h-[18px] w-[15px]" /><span className="ml-[2px] inline-block origin-left scale-x-[1.3] text-[9.5px] font-medium tracking-[0.9px]">XBTS</span></div>
      </div>
      <svg viewBox="0 0 548 20" className="h-[20px] w-[548px]">
        <defs>
          <linearGradient id="deck" x1="0" x2="0" y1="0" y2="1"><stop offset="0" stopColor="#59646a" /><stop offset=".2" stopColor="#3a4444" /><stop offset="1" stopColor="#464f4f" /></linearGradient>
        </defs>
        <path d="M0 11H547L530 15L500 17.5H50L18 15Z" fill="#020303" />
        <path d="M61 17h28v2h-28z M459 17h28v2h-28z" fill="#353d3f" />
        <path d="M0 0H547V11H0Z" fill="url(#deck)" />
        <path d="M0 0H3V11H0Z M544 0H547V11H544Z" fill="#262d30" />
      </svg>
    </div>
  );
}

export default function App() {
  return (
    <div className="relative h-[617px] w-[1000px] overflow-hidden bg-white font-[Roboto,sans-serif]">
      <Monitor />
      <Laptop />
    </div>
  );
}
